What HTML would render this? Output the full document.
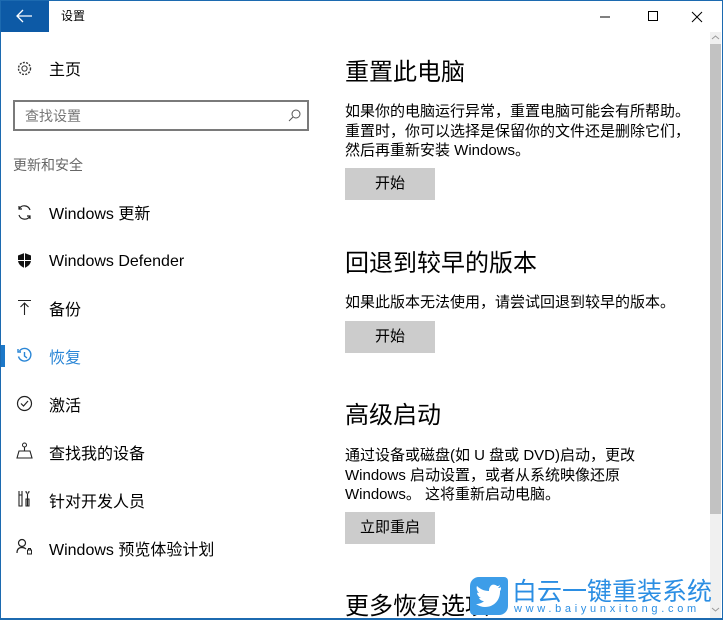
<!DOCTYPE html>
<html><head><meta charset="utf-8"><style>
*{margin:0;padding:0;box-sizing:border-box}
body{width:723px;height:620px;overflow:hidden;background:#fff;font-family:"Liberation Sans","Noto Sans CJK SC",sans-serif;color:#000;position:relative}
.a{position:absolute;white-space:nowrap}
.frame{position:absolute;left:0;top:0;width:723px;height:620px;border:1px solid #1c6ab0;border-bottom:2px solid #1c6ab0;pointer-events:none}
.nav{font-size:16px;left:49px}
.ic{position:absolute;left:16px}
.h{font-size:24px;left:345px;color:#000}
.p{font-size:15px;left:345px;line-height:19.5px;color:#000}
.btn{position:absolute;left:345px;width:90px;height:32px;background:#ccc;font-size:15px;text-align:center;line-height:32px}
</style></head><body>
<div class="a" style="left:1px;top:1px;width:48px;height:31px;background:#0d5aa6"></div>
<svg class="a" style="left:16px;top:9px" width="18" height="14" viewBox="0 0 18 14"><path d="M1 7H16M7 1L1 7L7 13" stroke="#fff" stroke-width="1.3" fill="none"/></svg>
<div class="a" style="left:61px;top:7px;font-size:12px">设置</div>
<svg class="a" style="left:598px;top:10px" width="110" height="14"><path d="M2 7H12" stroke="#000"/><rect x="50.5" y="1.5" width="9" height="9" stroke="#000" fill="none"/><path d="M94 2L104 12M104 2L94 12" stroke="#000"/></svg>

<svg class="ic" style="top:60px" width="17" height="17" viewBox="0 0 17 17"><circle cx="8.5" cy="8.5" r="2.6" stroke="#333" fill="none"/><circle cx="8.5" cy="8.5" r="6" stroke="#333" stroke-width="1.4" stroke-dasharray="2 1.3" fill="none"/></svg>
<div class="a nav" style="top:56px">主页</div>
<div class="a" style="left:13px;top:100px;width:296px;height:31px;border:2px solid #7a7a7a"></div>
<div class="a" style="left:25px;top:106px;font-size:14px;color:#777">查找设置</div>
<svg class="a" style="left:288px;top:108px" width="14" height="14"><circle cx="8" cy="6" r="4" stroke="#555" fill="none"/><path d="M5 9L1 13" stroke="#555"/></svg>
<div class="a" style="left:13px;top:155px;font-size:14px;color:#666">更新和安全</div>

<svg class="ic" style="top:204px" width="17" height="17" viewBox="0 0 17 17"><path d="M14 6A6 6 0 0 0 3 5M3 11A6 6 0 0 0 14 12M3 2V5H6M14 15V12H11" stroke="#222" fill="none" stroke-width="1.2"/></svg>
<div class="a nav" style="top:200px">Windows 更新</div>
<svg class="ic" style="top:252px" width="17" height="17" viewBox="0 0 17 17"><path d="M8.5 1L2 3.5V8C2 12 5 14.5 8.5 16C12 14.5 15 12 15 8V3.5Z" fill="#111"/><path d="M8.5 1V16M2 8.5H15" stroke="#fff" stroke-width="1"/></svg>
<div class="a nav" style="top:253px">Windows Defender</div>
<svg class="ic" style="top:299px" width="17" height="17"><path d="M2 1.5H15M8.5 4V16M4.5 8L8.5 4L12.5 8" stroke="#222" fill="none" stroke-width="1.1"/></svg>
<div class="a nav" style="top:296px">备份</div>
<div class="a" style="left:1px;top:345px;width:4px;height:22px;background:#1c78c8"></div>
<svg class="ic" style="top:347px" width="17" height="17"><path d="M3.5 4A6.3 6.3 0 1 1 2.5 9.5M2 2V5H5M8.5 5V9L11 11" stroke="#2a86d6" fill="none" stroke-width="1.4"/></svg>
<div class="a nav" style="top:344px;color:#2a86d6">恢复</div>
<svg class="ic" style="top:395px" width="17" height="17"><circle cx="8.5" cy="8.5" r="7" stroke="#222" fill="none" stroke-width="1.2"/><path d="M5 8.5L7.5 11L12 6" stroke="#222" fill="none" stroke-width="1.2"/></svg>
<div class="a nav" style="top:392px">激活</div>
<svg class="ic" style="top:442px" width="17" height="17"><circle cx="8.5" cy="3" r="2" stroke="#222" fill="none"/><path d="M8.5 5V9M1 16L3 9H14L16 16Z" stroke="#222" fill="none" stroke-width="1.1"/></svg>
<div class="a nav" style="top:440px">查找我的设备</div>
<svg class="ic" style="top:490px" width="17" height="17"><path d="M3 1V5M6 1V5M3 5H6V16H3ZM10 1C10 4 13 4 13 1M11.5 4V16M10 9H13V16H10Z" stroke="#222" fill="none" stroke-width="1.1"/></svg>
<div class="a nav" style="top:488px">针对开发人员</div>
<svg class="ic" style="top:538px" width="17" height="17"><circle cx="6" cy="5" r="3.5" stroke="#222" fill="none" stroke-width="1.2"/><path d="M1 15C1 11 3 9.5 6 9.5C8 9.5 9 10 10 11" stroke="#222" fill="none" stroke-width="1.2"/><rect x="11.5" y="12" width="4" height="4" stroke="#222" fill="none"/><path d="M12.5 12V10.5H14.5V12" stroke="#222" fill="none"/></svg>
<div class="a nav" style="top:536px">Windows 预览体验计划</div>

<div class="a h" style="top:52px">重置此电脑</div>
<div class="a p" style="top:102px">如果你的电脑运行异常，重置电脑可能会有所帮助。<br>重置时，你可以选择是保留你的文件还是删除它们，<br>然后再重新安装 Windows。</div>
<div class="btn" style="top:168px">开始</div>
<div class="a h" style="top:243px">回退到较早的版本</div>
<div class="a p" style="top:293px">如果此版本无法使用，请尝试回退到较早的版本。</div>
<div class="btn" style="top:321px">开始</div>
<div class="a h" style="top:395px">高级启动</div>
<div class="a p" style="top:446px">通过设备或磁盘(如 U 盘或 DVD)启动，更改<br>Windows 启动设置，或者从系统映像还原<br>Windows。 这将重新启动电脑。</div>
<div class="btn" style="top:512px">立即重启</div>
<div class="a h" style="top:586px">更多恢复选项</div>

<div class="a" style="left:710px;top:32px;width:11px;height:586px;background:#f0f0f0"></div>
<div class="a" style="left:710px;top:44px;width:11px;height:470px;background:#c2c2c2"></div>
<svg class="a" style="left:711px;top:34px" width="9" height="8"><path d="M1 5L4.5 2L8 5" stroke="#999" fill="none"/></svg>
<svg class="a" style="left:711px;top:606px" width="9" height="8"><path d="M1 2L4.5 5L8 2" stroke="#999" fill="none"/></svg>

<div class="a" style="left:470px;top:577px;width:38px;height:38px;background:#3d9de8;border-radius:9px 4px 9px 4px"></div>
<svg class="a" style="left:474px;top:583px" width="30" height="26" viewBox="0 0 30 26"><path d="M27 4C26 5 25 5 24 5C25 4 26 3 26 2C25 3 24 3 23 3C21 1 17 1 16 4C15 5 15 7 15 8C10 8 6 6 3 3C2 5 3 8 5 10C4 10 3 10 3 9C3 12 5 14 7 15C6 15 5 15 5 15C6 17 8 18 10 18C8 20 5 21 2 21C5 23 8 24 11 24C21 24 26 16 26 9V8C27 7 27 6 27 4Z" fill="#fff"/></svg>
<div class="a" style="left:512px;top:572px;font-size:25px;color:#2b8ee3">白云一键重装系统</div>
<div class="a" style="left:514px;top:603px;font-size:11px;color:#2b8ee3;letter-spacing:3.7px">www.baiyunxitong.com</div>
<div class="frame"></div>
</body></html>
